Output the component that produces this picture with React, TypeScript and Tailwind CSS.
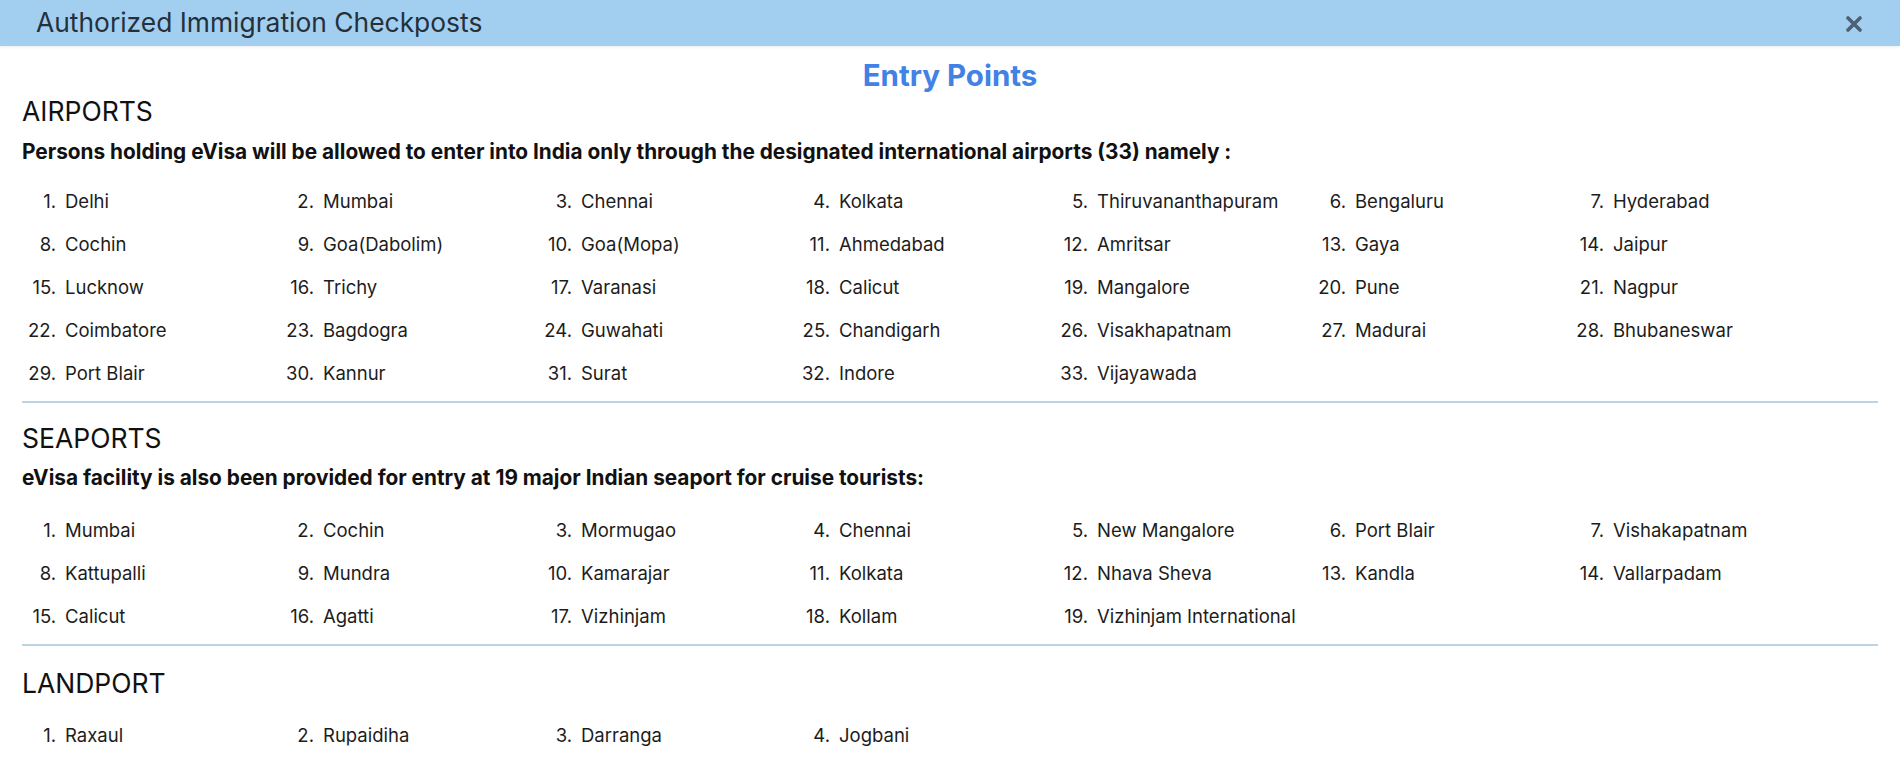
import React from "react";

const airports = [
  "Delhi", "Mumbai", "Chennai", "Kolkata", "Thiruvananthapuram", "Bengaluru", "Hyderabad",
  "Cochin", "Goa(Dabolim)", "Goa(Mopa)", "Ahmedabad", "Amritsar", "Gaya", "Jaipur",
  "Lucknow", "Trichy", "Varanasi", "Calicut", "Mangalore", "Pune", "Nagpur",
  "Coimbatore", "Bagdogra", "Guwahati", "Chandigarh", "Visakhapatnam", "Madurai", "Bhubaneswar",
  "Port Blair", "Kannur", "Surat", "Indore", "Vijayawada",
];

const seaports = [
  "Mumbai", "Cochin", "Mormugao", "Chennai", "New Mangalore", "Port Blair", "Vishakapatnam",
  "Kattupalli", "Mundra", "Kamarajar", "Kolkata", "Nhava Sheva", "Kandla", "Vallarpadam",
  "Calicut", "Agatti", "Vizhinjam", "Kollam", "Vizhinjam International",
];

const landports = ["Raxaul", "Rupaidiha", "Darranga", "Jogbani"];

function PortList({ items, className }: { items: string[]; className?: string }) {
  return (
    <ol className={"grid grid-cols-[repeat(7,258px)] " + (className ?? "")}>
      {items.map((name, i) => (
        <li key={i} className="flex h-[43px] items-center text-[18.5px] text-[#1c1c1c]">
          <span className="w-[34px] shrink-0 text-right">{i + 1}.</span>
          <span className="ml-[9px] whitespace-nowrap">{name}</span>
        </li>
      ))}
    </ol>
  );
}

export default function App() {
  return (
    <div
      className="w-[1900px] h-[761px] overflow-hidden bg-white"
      style={{ fontFamily: "Inter, 'Noto Sans', 'Liberation Sans', sans-serif" }}
    >
      <div className="flex h-[46px] items-center justify-between bg-[#a2cfef] pl-[36px] pr-[38px] shadow-[0_1px_3px_rgba(0,0,0,0.08)]">
        <span className="text-[26.4px] text-[#26303b]">Authorized Immigration Checkposts</span>
        <svg width="16" height="16" viewBox="0 0 16 16" className="mt-[1px]">
          <path d="M2 2 L14 14 M14 2 L2 14" stroke="#4e6174" strokeWidth="3.6" strokeLinecap="round" />
        </svg>
      </div>

      <div className="px-[22px]">
        <h1 className="pt-[9px] text-center text-[29.5px] font-bold leading-[40px] text-[#4182e4]">Entry Points</h1>

        <h2 className="mt-[1px] text-[26.5px] leading-[30px] text-[#111]">AIRPORTS</h2>
        <p className="mt-[13px] text-[20.8px] font-bold leading-[26px] text-[#111]">
          Persons holding eVisa will be allowed to enter into India only through the designated international airports (33) namely :
        </p>
        <PortList items={airports} className="mt-[15px]" />

        <div className="mt-[6px] h-[2px] bg-[#bcd4e1]" />

        <h2 className="mt-[20px] text-[26.5px] leading-[30px] text-[#111]">SEAPORTS</h2>
        <p className="mt-[12px] text-[20.8px] font-bold leading-[26px] text-[#111]">
          eVisa facility is also been provided for entry at 19 major Indian seaport for cruise tourists:
        </p>
        <PortList items={seaports} className="mt-[18px]" />

        <div className="mt-[6px] h-[2px] bg-[#bcd4e1]" />

        <h2 className="mt-[22px] text-[26.5px] leading-[30px] text-[#111]">LANDPORT</h2>
        <PortList items={landports} className="mt-[16px]" />
      </div>
    </div>
  );
}
